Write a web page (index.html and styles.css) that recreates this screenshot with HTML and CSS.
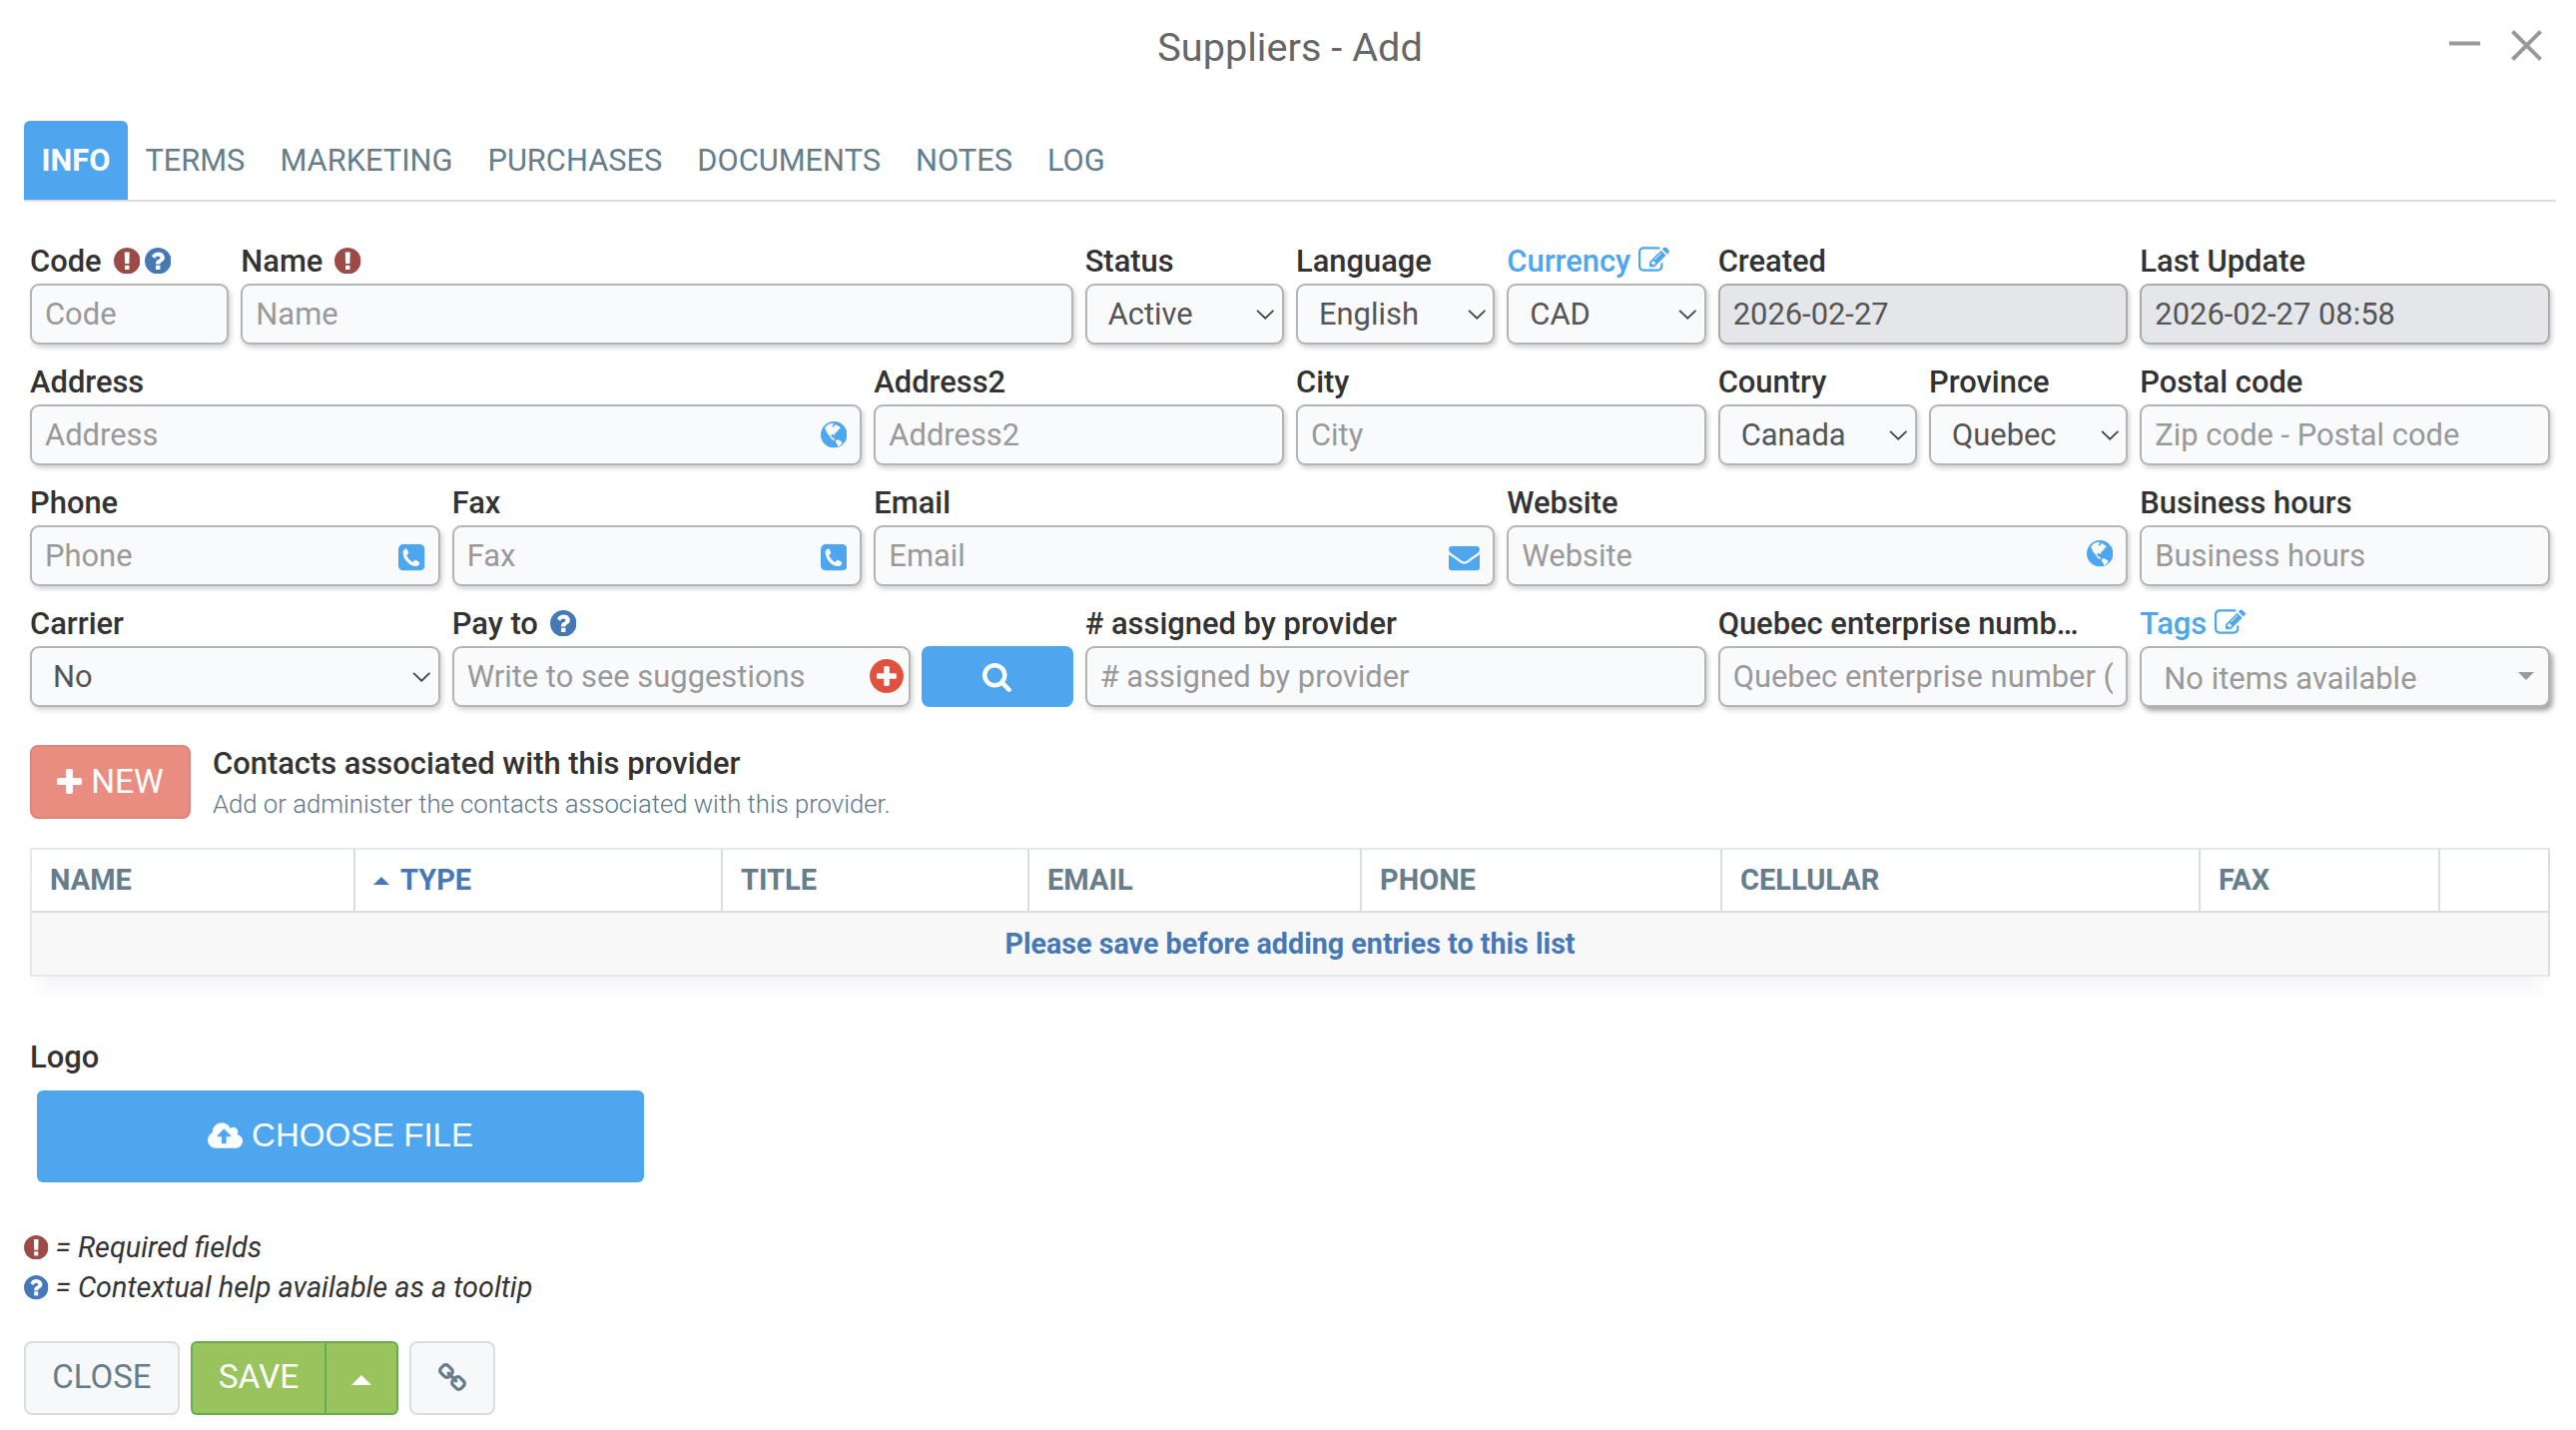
FILE: index.html
```html
<!DOCTYPE html>
<html lang="en">
<head>
    <meta charset="UTF-8">
    <meta name="viewport" content="width=device-width, initial-scale=1.0">
    <title>Suppliers - Add</title>
    <link rel="stylesheet" href="styles.css">
</head>
<body>

    <!-- Icon sprite -->
    <svg class="sprite">
        <symbol id="required" viewBox="128 128 1536 1536"><path d="M896 128q209 0 385.5 103t279.5 279.5 103 385.5-103 385.5-279.5 279.5-385.5 103-385.5-103-279.5-279.5-103-385.5 103-385.5 279.5-279.5 385.5-103zm128 1247v-190q0-14-9-23.5t-22-9.5h-192q-13 0-23 10t-10 23v190q0 13 10 23t23 10h192q13 0 22-9.5t9-23.5zm-2-344l18-621q0-12-10-18-10-8-24-8h-220q-14 0-24 8-10 6-10 18l17 621q0 10 10 17.5t24 7.5h185q14 0 23.5-7.5t10.5-17.5z"/></symbol>
        <symbol id="help" viewBox="128 128 1536 1536"><path d="M1024 1376v-192q0-14-9-23t-23-9h-192q-14 0-23 9t-9 23v192q0 14 9 23t23 9h192q14 0 23-9t9-23zm256-672q0-88-55.5-163t-138.5-116-170-41q-243 0-371 213-15 24 8 42l132 100q7 6 19 6 16 0 25-12 53-68 86-92 34-24 86-24 48 0 85.5 26t37.5 59q0 38-20 61t-68 45q-63 28-115.5 86.5t-52.5 125.5v36q0 14 9 23t23 9h192q14 0 23-9t9-23q0-19 21.5-49.5t54.5-49.5q32-18 49-28.5t46-35 44.5-48 28-60.5 12.5-81zm384 192q0 209-103 385.5t-279.5 279.5-385.5 103-385.5-103-279.5-279.5-103-385.5 103-385.5 279.5-279.5 385.5-103 385.5 103 279.5 279.5 103 385.5z"/></symbol>
        <symbol id="edit" viewBox="0 128 1792 1408"><path d="M888 1184l116-116-152-152-116 116v56h96v96h56zm440-720q-16-16-33 1l-350 350q-17 17-1 33t33-1l350-350q17-17 1-33zm80 594v190q0 119-84.5 203.5t-203.5 84.5h-832q-119 0-203.5-84.5t-84.5-203.5v-832q0-119 84.5-203.5t203.5-84.5h832q63 0 117 25 15 7 18 23 3 17-9 29l-49 49q-14 14-32 8-23-6-45-6h-832q-66 0-113 47t-47 113v832q0 66 47 113t113 47h832q66 0 113-47t47-113v-126q0-13 9-22l64-64q15-15 35-7t20 29zm-96-738l288 288-672 672h-288v-288zm444 132l-92 92-288-288 92-92q28-28 68-28t68 28l152 152q28 28 28 68t-28 68z"/></symbol>
        <symbol id="globe" viewBox="0 0 26 26">
            <circle cx="13" cy="13" r="13"/>
            <path fill="#f9fafc" d="M4 6.500l2.500-3 3-1.200 2.800-.6.400 1.600-1.700 1.200 1.800 1.200 1.200-2.200 1.500-.3 1.200 1.300 1.600.4 1.200 2.100-2.100.7-.4 1.500-2 1.600-1.200 1.700-.6 1.700-.6-1.400-1.900.3-.6 1.800.9 1 1.300-.3.3 1.300 1.100.6.500 1.400-1.700-.4-2.600-1.700-1.300-2.700-1.900-2.100-1.200-2.500z"/>
            <path fill="#f9fafc" d="M14.800 18.600l1.800-.8 2 .8 2.600 1.700-.8 2-2 1.800-1.700.9-.3-2.400-1.700-1.900z"/>
        </symbol>
        <symbol id="phone" viewBox="0 0 26 26">
            <rect width="26" height="26" rx="5"/>
            <path fill="#f9fafc" d="M4.600 7.600c.2-1.700 1.300-2.900 2.900-3.200.6-.1 1 .2 1.200.7l1.200 3.100c.2.600.1 1-.4 1.400l-1.500 1.300c1.200 2.900 3.200 5.200 6.200 6.700l1.700-1.700c.4-.4.900-.5 1.400-.2l2.900 1.600c.5.300.7.700.6 1.300-.3 2-1.900 3.200-4.100 3.100C10.700 21.400 4.100 14.200 4.600 7.600z"/>
        </symbol>
        <symbol id="envelope" viewBox="0 256 1792 1408"><path d="M1792 710v794q0 66-47 113t-113 47h-1472q-66 0-113-47t-47-113v-794q44 49 101 87 362 246 497 345 57 42 92.500 65.500t94.500 48 110 24.500h2q51 0 110-24.500t94.500-48 92.500-65.500q170-123 498-345 57-39 100-87zm0-294q0 79-49 151t-122 123q-376 261-468 325-10 7-42.500 31t-54 38.500-52 32.500-57.500 27-50 9h-2q-23 0-50-9t-57.500-27-52-32.500-54-38.500-42.500-31q-91-64-262-182.500t-205-142.500q-62-42-117-115.500t-55-136.500q0-78 41.500-130t118.500-52h1472q65 0 112.500 47t47.500 113z"/></symbol>
        <symbol id="search" viewBox="64 128 1664 1664"><path d="M1216 832q0-185-131.500-316.500t-316.500-131.500-316.500 131.500-131.500 316.500 131.500 316.500 316.500 131.500 316.500-131.500 131.500-316.500zm512 832q0 52-38 90t-90 38q-54 0-90-38l-343-342q-179 124-399 124-143 0-273.500-55.500t-225-150-150-225-55.500-273.500 55.500-273.500 150-225 225-150 273.500-55.500 273.500 55.500 225 150 150 225 55.500 273.500q0 220-124 399l343 343q37 37 37 90z"/></symbol>
        <symbol id="plus" viewBox="192 128 1408 1408"><path d="M1600 736v192q0 40-28 68t-68 28h-416v416q0 40-28 68t-68 28h-192q-40 0-68-28t-28-68v-416h-416q-40 0-68-28t-28-68v-192q0-40 28-68t68-28h416v-416q0-40 28-68t68-28h192q40 0 68 28t28 68v416h416q40 0 68 28t28 68z"/></symbol>
        <symbol id="plus-circle" viewBox="128 128 1536 1536"><path d="M1344 960v-128q0-26-19-45t-45-19h-256v-256q0-26-19-45t-45-19h-128q-26 0-45 19t-19 45v256h-256q-26 0-45 19t-19 45v128q0 26 19 45t45 19h256v256q0 26 19 45t45 19h128q26 0 45-19t19-45v-256h256q26 0 45-19t19-45zm320-64q0 209-103 385.500t-279.500 279.500-385.500 103-385.500-103-279.500-279.500-103-385.500 103-385.500 279.500-279.500 385.500-103 385.500 103 279.500 279.500 103 385.500z"/></symbol>
        <symbol id="upload" viewBox="-64 128 1920 1408"><path d="M1216 864q0-14-9-23l-352-352q-9-9-23-9t-23 9l-351 351q-10 12-10 24 0 14 9 23t23 9h224v352q0 13 9.500 22.500t22.500 9.500h192q13 0 22.500-9.500t9.500-22.500v-352h224q13 0 22.500-9.500t9.500-22.500zm640 288q0 159-112.500 271.500t-271.500 112.500h-1088q-185 0-316.500-131.500t-131.500-316.500q0-130 70-240t188-165q-2-30-2-43 0-212 150-362t362-150q156 0 285.500 87t188.500 231q71-62 166-62 106 0 181 75t75 181q0 76-41 138 130 31 213.500 135.500t83.500 238.500z"/></symbol>
        <symbol id="link" viewBox="80 16 1632 1632"><path d="M1520 1216q0-40-28-68l-208-208q-28-28-68-28-42 0-72 32 3 3 19 18.500t21.500 21.500 15 19 13 25.500 3.500 27.500q0 40-28 68t-68 28q-15 0-27.500-3.500t-25.500-13-19-15-21.500-21.500-18.500-19q-33 31-33 73 0 40 28 68l206 207q27 27 68 27 40 0 68-26l147-146q28-28 28-67zm-703-705q0-40-28-68l-206-207q-28-28-68-28-39 0-68 27l-147 146q-28 28-28 67 0 40 28 68l208 208q27 27 68 27 42 0 72-31-3-3-19-18.500t-21.500-21.500-15-19-13-25.500-3.500-27.500q0-40 28-68t68-28q15 0 27.500 3.500t25.500 13 19 15 21.500 21.500 18.500 19q33-31 33-73zm895 705q0 120-85 203l-147 146q-83 83-203 83-121 0-204-85l-206-207q-83-83-83-203 0-123 88-209l-88-88q-86 88-208 88-120 0-204-84l-208-208q-84-84-84-204t85-203l147-146q83-83 203-83 121 0 204 85l206 207q83 83 83 203 0 123-88 209l88 88q86-88 208-88 120 0 204 84l208 208q84 84 84 204z"/></symbol>
        <symbol id="chevron" viewBox="0 0 20 11"><path d="M1 1l9 8.500L19 1" fill="none" stroke="currentColor" stroke-width="2"/></symbol>
        <symbol id="minimize" viewBox="0 0 31 31"><path d="M0 13.500h31" stroke="currentColor" stroke-width="4"/></symbol>
        <symbol id="close" viewBox="0 0 31 31"><path d="M1.500 1.500l28 28M29.500 1.500l-28 28" stroke="currentColor" stroke-width="4"/></symbol>
    </svg>

    <div class="header">
        <h1>Suppliers - Add</h1>
        <div class="window-buttons">
            <svg><use href="#minimize"/></svg>
            <svg><use href="#close"/></svg>
        </div>
    </div>

    <div class="tabs">
        <a class="tab active">INFO</a>
        <a class="tab">TERMS</a>
        <a class="tab">MARKETING</a>
        <a class="tab">PURCHASES</a>
        <a class="tab">DOCUMENTS</a>
        <a class="tab">NOTES</a>
        <a class="tab">LOG</a>
    </div>

    <div class="form">
        <div class="field">
            <label>Code <svg class="icon required"><use href="#required"/></svg><svg class="icon help"><use href="#help"/></svg></label>
            <input type="text" placeholder="Code">
        </div>
        <div class="field span-4">
            <label>Name <svg class="icon required"><use href="#required"/></svg></label>
            <input type="text" placeholder="Name">
        </div>
        <div class="field">
            <label>Status</label>
            <div class="control">
                <select><option>Active</option></select>
                <svg class="chevron"><use href="#chevron"/></svg>
            </div>
        </div>
        <div class="field">
            <label>Language</label>
            <div class="control">
                <select><option>English</option></select>
                <svg class="chevron"><use href="#chevron"/></svg>
            </div>
        </div>
        <div class="field">
            <label class="editable">Currency <svg class="edit"><use href="#edit"/></svg></label>
            <div class="control">
                <select><option>CAD</option></select>
                <svg class="chevron"><use href="#chevron"/></svg>
            </div>
        </div>
        <div class="field span-2">
            <label>Created</label>
            <input type="text" value="2026-02-27" readonly>
        </div>
        <div class="field span-2">
            <label>Last Update</label>
            <input type="text" value="2026-02-27 08:58" readonly>
        </div>

        <div class="field span-4">
            <label>Address</label>
            <div class="control">
                <input type="text" placeholder="Address">
                <svg class="input-icon"><use href="#globe"/></svg>
            </div>
        </div>
        <div class="field span-2">
            <label>Address2</label>
            <input type="text" placeholder="Address2">
        </div>
        <div class="field span-2">
            <label>City</label>
            <input type="text" placeholder="City">
        </div>
        <div class="field">
            <label>Country</label>
            <div class="control">
                <select><option>Canada</option></select>
                <svg class="chevron"><use href="#chevron"/></svg>
            </div>
        </div>
        <div class="field">
            <label>Province</label>
            <div class="control">
                <select><option>Quebec</option></select>
                <svg class="chevron"><use href="#chevron"/></svg>
            </div>
        </div>
        <div class="field span-2">
            <label>Postal code</label>
            <input type="text" placeholder="Zip code - Postal code">
        </div>

        <div class="field span-2">
            <label>Phone</label>
            <div class="control">
                <input type="text" placeholder="Phone">
                <svg class="input-icon phone"><use href="#phone"/></svg>
            </div>
        </div>
        <div class="field span-2">
            <label>Fax</label>
            <div class="control">
                <input type="text" placeholder="Fax">
                <svg class="input-icon phone"><use href="#phone"/></svg>
            </div>
        </div>
        <div class="field span-3">
            <label>Email</label>
            <div class="control">
                <input type="text" placeholder="Email">
                <svg class="input-icon envelope"><use href="#envelope"/></svg>
            </div>
        </div>
        <div class="field span-3">
            <label>Website</label>
            <div class="control">
                <input type="text" placeholder="Website">
                <svg class="input-icon website"><use href="#globe"/></svg>
            </div>
        </div>
        <div class="field span-2">
            <label>Business hours</label>
            <input type="text" placeholder="Business hours">
        </div>

        <div class="field span-2">
            <label>Carrier</label>
            <div class="control">
                <select><option>No</option></select>
                <svg class="chevron"><use href="#chevron"/></svg>
            </div>
        </div>
        <div class="field span-3">
            <label>Pay to <svg class="icon help"><use href="#help"/></svg></label>
            <div class="search-group">
                <div class="control">
                    <input type="text" placeholder="Write to see suggestions">
                    <svg class="input-icon add"><use href="#plus-circle"/></svg>
                </div>
                <button class="search"><svg><use href="#search"/></svg></button>
            </div>
        </div>
        <div class="field span-3">
            <label># assigned by provider</label>
            <input type="text" placeholder="# assigned by provider">
        </div>
        <div class="field span-2">
            <label>Quebec enterprise numb…</label>
            <input type="text" placeholder="Quebec enterprise number (NEQ)">
        </div>
        <div class="field span-2">
            <label class="editable">Tags <svg class="edit"><use href="#edit"/></svg></label>
            <div class="tags">No items available<span class="caret-down"></span></div>
        </div>
    </div>

    <div class="contacts">
        <button class="new"><svg><use href="#plus"/></svg>NEW</button>
        <div>
            <h2>Contacts associated with this provider</h2>
            <p>Add or administer the contacts associated with this provider.</p>
        </div>
    </div>

    <table>
        <colgroup>
            <col class="col-name"><col class="col-type"><col class="col-title"><col class="col-email">
            <col class="col-phone"><col class="col-cellular"><col class="col-fax"><col>
        </colgroup>
        <thead>
            <tr>
                <th>NAME</th>
                <th class="sorted"><span class="caret-up"></span>TYPE</th>
                <th>TITLE</th>
                <th>EMAIL</th>
                <th>PHONE</th>
                <th>CELLULAR</th>
                <th>FAX</th>
                <th></th>
            </tr>
        </thead>
        <tbody>
            <tr>
                <td colspan="8">Please save before adding entries to this list</td>
            </tr>
        </tbody>
    </table>

    <div class="logo">
        <label>Logo</label>
        <button class="choose"><svg><use href="#upload"/></svg>CHOOSE FILE</button>
    </div>

    <div class="legend">
        <div><svg class="required"><use href="#required"/></svg>= Required fields</div>
        <div><svg class="help"><use href="#help"/></svg>= Contextual help available as a tooltip</div>
    </div>

    <div class="footer">
        <button class="close">CLOSE</button>
        <div class="save-group">
            <button class="save">SAVE</button>
            <button class="save-more"><span class="caret-up"></span></button>
        </div>
        <button class="link"><svg><use href="#link"/></svg></button>
    </div>

</body>
</html>
```
FILE: styles.css
```css
* {
    box-sizing: border-box;
}
body {
    margin: 0;
    padding: 0 20px 0 24px;
    font-family: Roboto, sans-serif;
    font-size: 30.9px;
    color: #333;
    background: #fff;
}
svg {
    display: block;
    flex: none;
    fill: currentColor;
}
.sprite {
    display: none;
}
button {
    display: flex;
    align-items: center;
    justify-content: center;
    padding: 0 0 2px;
    font-family: inherit;
    font-size: 33.500px;
    border: 2px solid;
    border-radius: 8px;
    cursor: pointer;
}

/* Header */
.header {
    display: grid;
    grid-template-columns: 1fr auto 1fr;
    align-items: center;
    height: 95px;
    padding-right: 14px;
}
.header h1 {
    grid-column: 2;
    margin: 0 0 0 14px;
    font-size: 39.7px;
    font-weight: 400;
    color: #676767;
}
.window-buttons {
    display: flex;
    justify-content: flex-end;
    gap: 31px;
    padding-bottom: 4px;
    color: #999;
}
.window-buttons svg {
    width: 31px;
    height: 31px;
}

/* Tabs */
.tabs {
    display: flex;
    margin-top: 26px;
    font-size: 30.8px;
    border-bottom: 2px solid #ddd;
}
.tab {
    padding: 0 17.5px;
    line-height: 79px;
    color: #667d8b;
}
.tab.active {
    font-weight: 700;
    color: #fff;
    background: #4da6ee;
    border-radius: 6px 6px 0 0;
}

/* Form */
.form {
    display: grid;
    grid-template-columns: repeat(12, minmax(0, 1fr));
    gap: 14px 12px;
    margin: 36px 6px 0;
}
.span-2 {
    grid-column: span 2;
}
.span-3 {
    grid-column: span 3;
}
.span-4 {
    grid-column: span 4;
}
label {
    display: flex;
    align-items: center;
    height: 46px;
    font-weight: 500;
    white-space: nowrap;
}
.editable {
    color: #4da6ee;
}
.icon {
    width: 26.5px;
    height: 26.5px;
    margin-left: 12px;
}
.icon + .icon {
    margin-left: 4.5px;
}
.edit {
    width: 31px;
    height: 25px;
    margin: 0 0 3px 8px;
}
.required {
    color: #9c4a46;
}
.help {
    color: #4678b6;
}
.control {
    position: relative;
}
input,
select,
.tags {
    display: block;
    width: 100%;
    height: 61px;
    padding: 0 13px;
    font-family: inherit;
    font-size: 30.9px;
    color: #555;
    background: #f9fafc;
    border: 2px solid #b5b3b3;
    border-radius: 9px;
    box-shadow: 2px 3px 5px rgba(0, 0, 0, 0.18);
}
select {
    appearance: none;
    padding: 0 21px;
}
input::placeholder {
    color: #999;
    opacity: 1;
}
input[readonly] {
    background: #e5e6ea;
    border-color: #aaa;
}
.chevron {
    position: absolute;
    top: 26px;
    right: 9px;
    width: 18.5px;
    height: 10px;
    color: #444;
}
.input-icon {
    position: absolute;
    top: 17px;
    right: 15px;
    width: 26.5px;
    height: 26.5px;
    color: #4da6ee;
}
.input-icon.phone {
    top: 19px;
}
.input-icon.website {
    top: 15px;
}
.input-icon.envelope {
    top: 21px;
    width: 31px;
    height: 24.5px;
}
.input-icon.add {
    top: 13px;
    right: 7px;
    width: 34px;
    height: 34px;
    color: #e05140;
}
.search-group {
    display: flex;
    gap: 11px;
}
.search-group .control {
    flex: 1;
}
.search {
    width: 152px;
    height: 61px;
    color: #fff;
    background: #4da6ee;
    border: none;
}
.search svg {
    width: 29px;
    height: 29px;
    margin-top: 3px;
}
.tags {
    display: flex;
    align-items: center;
    justify-content: space-between;
    padding: 3px 14px 0 22px;
    color: #999;
    box-shadow: 3px 4px 5px rgba(0, 0, 0, 0.35);
}
.caret-down {
    margin-bottom: 4px;
    border: 8px solid transparent;
    border-top-color: #999;
    border-bottom: none;
}

/* Contacts */
.contacts {
    display: flex;
    align-items: center;
    gap: 22px;
    height: 74px;
    margin: 38px 0 29px 6px;
}
.new {
    gap: 9px;
    width: 161px;
    height: 74px;
    color: #fff;
    background: #e98d81;
    border-color: #db8780;
}
.new svg {
    width: 25px;
    height: 25px;
}
.contacts h2 {
    margin: 0;
    font-size: 30.9px;
    font-weight: 500;
    line-height: 43px;
}
.contacts p {
    margin: 0;
    font-size: 25.7px;
    font-weight: 300;
    line-height: 38px;
    color: #5d7889;
}

/* Table */
table {
    width: 2524px;
    margin-left: 6px;
    table-layout: fixed;
    border-spacing: 0;
    border: 2px solid #e3e9ed;
    border-right-color: #ddd;
    box-shadow: 0 18px 18px -8px rgba(0, 0, 0, 0.05);
}
th,
td {
    padding: 0;
    font-size: 29px;
    font-weight: 700;
}
th {
    height: 63px;
    padding: 0 0 2px 18px;
    text-align: left;
    color: #667d8b;
    border-right: 2px solid #ddd;
    border-bottom: 2px solid #ddd;
}
th:last-child {
    border-right: none;
}
td {
    height: 62px;
    font-size: 28.7px;
    text-align: center;
    color: #4678b6;
    background: #f8f8f8;
}
.sorted {
    color: #4678b6;
}
.caret-up {
    display: inline-block;
    border: 8px solid transparent;
    border-bottom-color: currentColor;
    border-top: none;
}
.sorted .caret-up {
    margin-right: 11px;
    vertical-align: 5px;
}
.col-name {
    width: 324px;
}
.col-type {
    width: 368px;
}
.col-title {
    width: 307px;
}
.col-email {
    width: 333px;
}
.col-phone {
    width: 361px;
}
.col-cellular {
    width: 479px;
}
.col-fax {
    width: 240px;
}

/* Logo */
.logo {
    margin: 57px 0 0 6px;
}
.choose {
    gap: 9px;
    width: 608px;
    height: 92px;
    margin: 11px 0 0 7px;
    font-family: "Liberation Sans", Arial, sans-serif;
    font-size: 33px;
    color: #fff;
    background: #4da6ee;
    border: none;
    border-radius: 6px;
}
.choose svg {
    width: 35px;
    height: 26px;
}

/* Legend */
.legend {
    margin-top: 45px;
    font-size: 28.8px;
    font-style: italic;
    line-height: 40.3px;
}
.legend div {
    display: flex;
    align-items: center;
    gap: 7px;
}
.legend svg {
    width: 24.5px;
    height: 24.5px;
}

/* Footer */
.footer {
    display: flex;
    gap: 11px;
    margin-top: 33px;
}
.footer button {
    height: 74px;
}
.close,
.link {
    color: #667d8b;
    background: #f6f8fa;
    border-color: #d8dde1;
}
.close {
    width: 156px;
    font-size: 33px;
}
.save-group {
    display: flex;
}
.save,
.save-more {
    color: #fff;
    background: #98c35d;
    border-color: #64ac54;
    border-radius: 6px;
}
.save {
    width: 134px;
    border-right: none;
    border-top-right-radius: 0;
    border-bottom-right-radius: 0;
}
.save-more {
    width: 74px;
    border-top-left-radius: 0;
    border-bottom-left-radius: 0;
}
.save-more .caret-up {
    border-width: 10px;
    border-top: none;
    margin-top: 6px;
}
.link {
    width: 86px;
}
.link svg {
    width: 28px;
    height: 28px;
}
```
